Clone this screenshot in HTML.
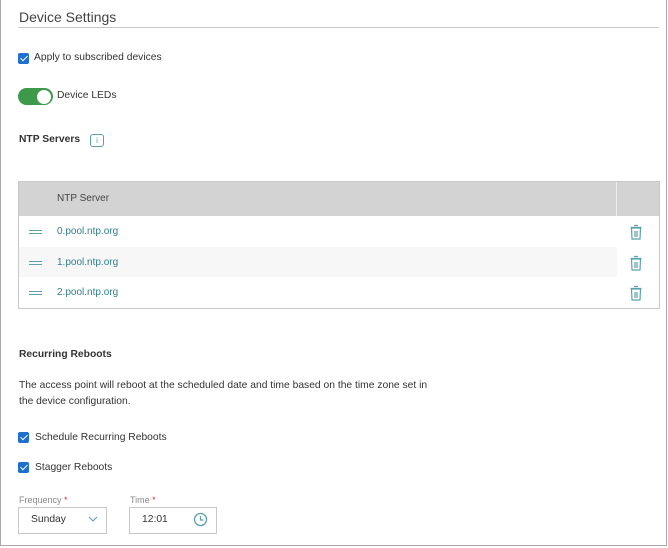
<!DOCTYPE html><html><head><style>
body{margin:0;width:668px;height:548px;font-family:"Liberation Sans",sans-serif;background:#fff;position:relative;overflow:hidden;color:#333}
.frame{position:absolute;left:0;top:0;width:665px;height:545px;border:1px solid #a9a9a9;border-top:none}
.a{position:absolute;white-space:nowrap}
.cb{position:absolute;width:11px;height:11px;background:#1f6fd1;border-radius:2px}
.cb:after{content:"";position:absolute;left:3.5px;top:1px;width:3px;height:6px;border:solid #fff;border-width:0 1.6px 1.6px 0;transform:rotate(45deg)}
.t{font-size:10.3px}
.link{color:#2f7f8f;font-size:10px}
.dr{position:absolute;left:29px;width:13px;height:2px;border-top:1px solid #5aa0ad;border-bottom:1px solid #5aa0ad;height:2px}
</style></head><body>
<div class="frame"></div>
<div class="a" style="left:19px;top:9px;font-size:14px;color:#444">Device Settings</div>
<div class="a" style="left:18px;top:27px;width:641px;height:1px;background:#c8c8c8"></div>
<div class="cb" style="left:18px;top:53px"></div>
<div class="a t" style="left:34px;top:52px">Apply to subscribed devices</div>
<div class="a" style="left:18px;top:88px;width:35px;height:17px;border-radius:9px;background:#3d9a4a"></div>
<div class="a" style="left:37px;top:89.5px;width:14px;height:14px;border-radius:50%;background:#fff"></div>
<div class="a t" style="left:57px;top:90px">Device LEDs</div>
<div class="a" style="left:19px;top:134px;font-size:10.3px;font-weight:bold">NTP Servers</div>
<div class="a" style="left:90px;top:134px;width:12px;height:11px;border:1px solid #5aa0ad;border-radius:3px;font-size:8px;color:#5aa0ad;text-align:center;line-height:11px">i</div>
<div class="a" style="left:18px;top:181px;width:640px;height:126px;border:1px solid #c8c8c8"></div>
<div class="a" style="left:19px;top:182px;width:640px;height:34px;background:#d3d3d3"></div>
<div class="a" style="left:616px;top:182px;width:1px;height:34px;background:#eee"></div>
<div class="a" style="left:19px;top:247px;width:598px;height:30px;background:#f7f7f7"></div>
<div class="a" style="left:57px;top:193px;font-size:10px;color:#444">NTP Server</div>
<div class="dr" style="top:230px"></div><div class="a link" style="left:57px;top:226px">0.pool.ntp.org</div>
<div class="dr" style="top:261px"></div><div class="a link" style="left:57px;top:257px">1.pool.ntp.org</div>
<div class="dr" style="top:291px"></div><div class="a link" style="left:57px;top:287px">2.pool.ntp.org</div>
<svg class="a" style="left:628px;top:223px" width="16" height="18" viewBox="0 0 16 18"><g fill="none" stroke="#5aa0ad" stroke-width="1.2"><path d="M6 2.5h4M2.5 4.5h11"/><path d="M3.5 5h9l-.5 11h-8z"/><path d="M7 8v6M9 8v6"/></g></svg>
<svg class="a" style="left:628px;top:254px" width="16" height="18" viewBox="0 0 16 18"><g fill="none" stroke="#5aa0ad" stroke-width="1.2"><path d="M6 2.5h4M2.5 4.5h11"/><path d="M3.5 5h9l-.5 11h-8z"/><path d="M7 8v6M9 8v6"/></g></svg>
<svg class="a" style="left:628px;top:284px" width="16" height="18" viewBox="0 0 16 18"><g fill="none" stroke="#5aa0ad" stroke-width="1.2"><path d="M6 2.5h4M2.5 4.5h11"/><path d="M3.5 5h9l-.5 11h-8z"/><path d="M7 8v6M9 8v6"/></g></svg>
<div class="a" style="left:19px;top:349px;font-size:10.3px;font-weight:bold">Recurring Reboots</div>
<div class="a t" style="left:19px;top:378px;line-height:16px">The access point will reboot at the scheduled date and time based on the time zone set in<br>the device configuration.</div>
<div class="cb" style="left:18px;top:432px"></div>
<div class="a t" style="left:35px;top:432px">Schedule Recurring Reboots</div>
<div class="cb" style="left:18px;top:462px"></div>
<div class="a t" style="left:35px;top:462px">Stagger Reboots</div>
<div class="a" style="left:19px;top:495px;font-size:9px;color:#888">Frequency <span style="color:#d33">*</span></div>
<div class="a" style="left:130px;top:495px;font-size:9px;color:#888">Time <span style="color:#d33">*</span></div>
<div class="a" style="left:18px;top:507px;width:87px;height:25px;border:1px solid #c8c8c8"></div>
<div class="a t" style="left:31px;top:514px">Sunday</div>
<svg class="a" style="left:88px;top:516px" width="10" height="6"><path d="M1 1l4 4 4-4" fill="none" stroke="#5aa0ad" stroke-width="1.1"/></svg>
<div class="a" style="left:129px;top:507px;width:86px;height:25px;border:1px solid #c8c8c8"></div>
<div class="a t" style="left:142px;top:514px">12:01</div>
<svg class="a" style="left:193px;top:512px" width="15" height="15"><circle cx="7.5" cy="7.5" r="6" fill="none" stroke="#5aa0ad" stroke-width="1.3"/><path d="M7.5 4v4h3" fill="none" stroke="#5aa0ad" stroke-width="1.2"/></svg>
</body></html>
